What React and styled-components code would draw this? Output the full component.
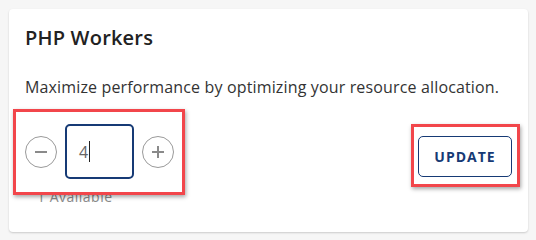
import React from "react";
import styled, { createGlobalStyle } from "styled-components";

const GlobalStyle = createGlobalStyle`
	body {
		margin: 0;
		background: #f6f6f6;
		font-family: "Open Sans", "Noto Sans", sans-serif;
	}
`;

const Page = styled.div`
	padding: 9px;
`;

const Card = styled.div`
	box-sizing: border-box;
	width: 519px;
	height: 223px;
	padding: 15px 16px;
	background: #fff;
	border-radius: 4px;
	box-shadow: 0 1px 2px rgba(0, 0, 0, 0.18);
`;

const Title = styled.h2`
	margin: 0;
	font-size: 20px;
	line-height: 28px;
	font-weight: 600;
	letter-spacing: 0.2px;
	color: #222;
`;

const Description = styled.p`
	margin: 23px 0 0;
	font-size: 16px;
	line-height: 24px;
	letter-spacing: 0.15px;
	color: #333;
`;

const Controls = styled.div`
	display: flex;
	justify-content: space-between;
	align-items: flex-start;
	margin-top: 10px;
`;

const StepperGroup = styled.div`
	display: flex;
	flex-direction: column;
	align-items: flex-start;
`;

const Highlight = styled.div`
	position: relative;
	z-index: 1;
	display: flex;
	align-items: center;
	background: #fff;
	border: 3px solid #f2464b;
	box-shadow: 1px 2px 4px rgba(0, 0, 0, 0.35);
	padding: ${props => props.pad};
	margin: ${props => props.offset};
`;

const Stepper = styled.div`
	display: flex;
	align-items: center;
	gap: 8px;
`;

const RoundButton = styled.button`
	display: flex;
	align-items: center;
	justify-content: center;
	width: 32px;
	height: 32px;
	padding: 0;
	border: 1px solid #9a9a9a;
	border-radius: 50%;
	background: #fff;
	color: #8a8a8a;
`;

const ValueBox = styled.div`
	box-sizing: border-box;
	display: flex;
	align-items: center;
	width: 69px;
	height: 55px;
	padding-left: 12px;
	border: 2px solid #163a75;
	border-radius: 5px;
	font-size: 16px;
	color: #666;
`;

const Caret = styled.span`
	display: inline-block;
	width: 1px;
	height: 21px;
	margin-left: 1px;
	background: #222;
`;

const Available = styled.span`
	margin: -8px 0 0 12px;
	font-size: 14px;
	line-height: 20px;
	letter-spacing: 0.5px;
	color: #8a8a8a;
`;

const UpdateButton = styled.button`
	box-sizing: border-box;
	width: 94px;
	height: 41px;
	padding: 0;
	border: 1px solid #163a75;
	border-radius: 5px;
	background: #fff;
	font-family: "Open Sans", sans-serif;
	font-size: 14px;
	font-weight: 700;
	letter-spacing: 1px;
	color: #163a75;
`;

const MinusIcon = () => (
	<svg width="14" height="14" viewBox="0 0 14 14">
		<path d="M1 7h12" stroke="currentColor" strokeWidth="2" />
	</svg>
);

const PlusIcon = () => (
	<svg width="14" height="14" viewBox="0 0 14 14">
		<path d="M1 7h12M7 1v12" stroke="currentColor" strokeWidth="2" />
	</svg>
);

const App = () => {
	const workers = 4;
	return (
		<Page>
			<GlobalStyle />
			<Card>
				<Title>PHP Workers</Title>
				<Description>Maximize performance by optimizing your resource allocation.</Description>
				<Controls>
					<StepperGroup>
						<Highlight pad="12px 8px 13px 9px" offset="0 0 0 -12px">
							<Stepper>
								<RoundButton aria-label="Decrease"><MinusIcon /></RoundButton>
								<ValueBox>{workers}<Caret /></ValueBox>
								<RoundButton aria-label="Increase"><PlusIcon /></RoundButton>
							</Stepper>
						</Highlight>
						<Available>1 Available</Available>
					</StepperGroup>
					<Highlight pad="9px 5px 7px 4px" offset="15px -8px 0 0">
						<UpdateButton>UPDATE</UpdateButton>
					</Highlight>
				</Controls>
			</Card>
		</Page>
	);
};

export default App;
